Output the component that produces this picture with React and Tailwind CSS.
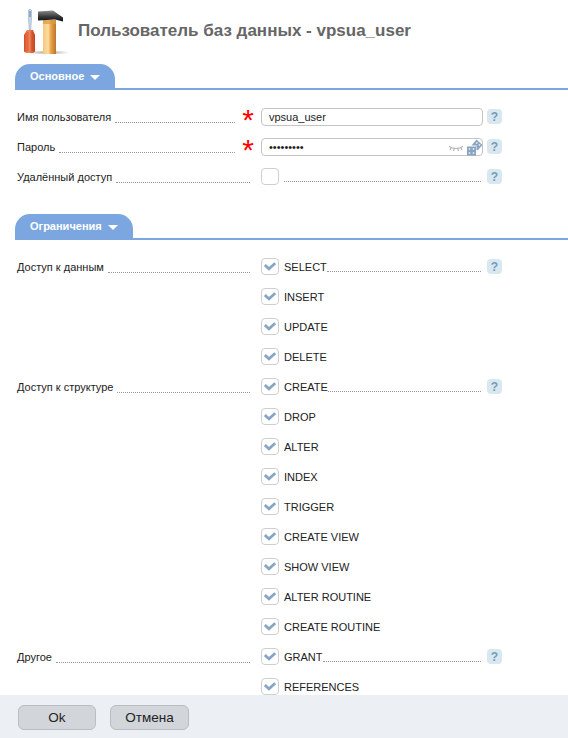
const font = { fontFamily: '"Liberation Sans", Arial, sans-serif' };

function Logo() {
  return (
    <svg width="60" height="56" viewBox="0 0 60 56" className="shrink-0 mb-[7px]">
      <defs>
        <linearGradient id="hnd" x1="0" x2="1" y1="0" y2="0">
          <stop offset="0" stopColor="#f6c67c" />
          <stop offset="0.4" stopColor="#fbdca4" />
          <stop offset="0.6" stopColor="#eaa548" />
          <stop offset="1" stopColor="#b9752a" />
        </linearGradient>
        <linearGradient id="red" x1="0" x2="1" y1="0" y2="0">
          <stop offset="0" stopColor="#d9481f" />
          <stop offset="0.45" stopColor="#f28a5e" />
          <stop offset="1" stopColor="#c63d16" />
        </linearGradient>
        <linearGradient id="head" x1="0" x2="0" y1="0" y2="1">
          <stop offset="0" stopColor="#8a8a8a" />
          <stop offset="0.55" stopColor="#3a3a3a" />
          <stop offset="1" stopColor="#0e0e0e" />
        </linearGradient>
        <radialGradient id="shadow">
          <stop offset="0" stopColor="#8a8070" stopOpacity="0.75" />
          <stop offset="1" stopColor="#8a8070" stopOpacity="0" />
        </radialGradient>
      </defs>
      <ellipse cx="38" cy="51.5" rx="22" ry="2.2" fill="url(#shadow)" />
      <path d="M18.5 9 Q20 7.5 21.5 9 L21.5 18 L20.8 29 L19.2 29 L18.5 18 Z" fill="#c6d6e8" stroke="#8aa5c2" strokeWidth="0.5" />
      <rect x="19.5" y="10" width="1" height="6" fill="#5a7ca4" />
      <path d="M17 29 L23 29 L25 34 L25 50 Q25 52 20 52 Q14 52 14 50 L14 34 Z" fill="url(#red)" />
      <path d="M18 31 L18 50 M22 31 L22 50" stroke="#a82e0c" strokeWidth="0.7" opacity="0.5" />
      <rect x="33" y="19" width="13" height="34" fill="url(#hnd)" />
      <rect x="33" y="19" width="13" height="4" fill="#d99a45" opacity="0.7" />
      <path d="M28 10.5 L43 9.5 L53 16.5 L53 20.5 L45 18.5 L28 19.5 Z" fill="url(#head)" />
    </svg>
  );
}

function Tab({ children }) {
  return (
    <div className="flex flex-col">
      <div className="flex items-end">
        <div className="h-6 flex items-center gap-[6px] pl-[15px] pr-[15px] rounded-t-[15px] bg-[#7ba6df] text-white font-bold text-[11px]">
          <span>{children}</span>
          <svg width="10" height="5" viewBox="0 0 10 5" className="mt-[2px]"><path d="M0 0H10L5 5Z" fill="#fff" /></svg>
        </div>
      </div>
      <div className="h-[2px] bg-[#7ba6df]" />
    </div>
  );
}

function Help() {
  return (
    <div className="w-[15px] h-[15px] mb-[1px] rounded-[4px] bg-[#d9e7ef] text-[#6f9dc0] font-bold text-[12px] flex items-center justify-center shrink-0">?</div>
  );
}

function Box({ checked }) {
  return (
    <div className="w-[18px] h-[17px] mb-[1px] rounded-[4px] border border-[#cfcfcf] bg-white flex items-center justify-center shrink-0">
      {checked && (
        <svg width="12" height="9" viewBox="0 0 12 9">
          <path d="M0.8 3 L5 6.8 L11.2 1.2" fill="none" stroke="#86a6c4" strokeWidth="2.8" />
        </svg>
      )}
    </div>
  );
}

function Row({ label, star, help, children }) {
  return (
    <div className="h-[30px] flex items-center">
      <div className={"flex items-center gap-1 pl-[17px] shrink-0 " + (star ? "w-[235px]" : "w-[250px]")}>
        {label && <span className="whitespace-nowrap">{label}</span>}
        {label && <div className="flex-1 mt-[10px] border-b border-dotted border-[#999]" />}
      </div>
      <div className={"flex justify-center text-[#f00] text-[30px] leading-none font-normal h-[18px] -mt-[6px] shrink-0 " + (star ? "w-[26px]" : "w-[11px]")}>
        {star ? "*" : ""}
      </div>
      <div className="w-[222px] flex items-center shrink-0">{children}</div>
      <div className="w-[4px] shrink-0" />
      {help ? <Help /> : null}
    </div>
  );
}

function RightLeader({ className = "" }) {
  return <div className={"flex-1 mt-2 mr-[2px] border-b border-dotted border-[#999] " + className} />;
}

function CheckRow({ label, text, help }) {
  return (
    <Row label={label} help={help}>
      <Box checked />
      <span className="ml-[5px] whitespace-nowrap">{text}</span>
      {help && <RightLeader />}
    </Row>
  );
}

function Input({ children, icons }) {
  return (
    <div className="w-full h-[18px] rounded-[4px] border border-[#c4c4c4] bg-white flex items-center pl-[7px] text-[#222]">
      <span className="flex-1">{children}</span>
      {icons}
    </div>
  );
}

const pwIcons = (
  <div className="flex items-center gap-[3px] mr-[-1px]">
    <svg width="16" height="7" viewBox="0 0 16 7" className="mt-[3px]">
      <path d="M1 1.5 Q8 5.5 15 1.5 M3 3 L2 5 M6 4 L5.5 6 M10 4 L10.5 6 M13 3 L14 5" fill="none" stroke="#a8a8a8" strokeWidth="1" />
    </svg>
    <svg width="16" height="17" viewBox="0 0 16 17">
      <path d="M9.5 0.5 L15.5 6 L11 11 L9.5 11 L9.5 6.5 L4.5 6.5 Z" fill="#8aa5c2" />
      <circle cx="9.8" cy="4" r="0.9" fill="#dfe8f0" />
      <circle cx="12.5" cy="6" r="0.9" fill="#dfe8f0" />
      <rect x="0" y="7.5" width="9" height="9" fill="#8aa5c2" />
      <circle cx="2.5" cy="10" r="0.9" fill="#dfe8f0" />
      <circle cx="6.5" cy="10" r="0.9" fill="#dfe8f0" />
      <circle cx="2.5" cy="14" r="0.9" fill="#dfe8f0" />
      <circle cx="6.5" cy="14" r="0.9" fill="#dfe8f0" />
    </svg>
  </div>
);

function Btn({ children, className = "" }) {
  return (
    <div className={"h-[25px] pt-[1px] rounded-[6px] border border-[#b9bec4] bg-[#d2d6db] flex items-center justify-center text-[13.5px] text-[#222] " + className}>
      {children}
    </div>
  );
}

export default function App() {
  return (
    <div style={font} className="w-[568px] h-[738px] flex flex-col bg-white text-[11px] text-[#222] overflow-hidden">
      <div className="flex-1 min-h-0 overflow-hidden">
        <div className="h-[64px] flex items-center pl-[10px] gap-2">
          <Logo />
          <h1 className="text-[17px] mb-[2px] font-bold text-[#666]">Пользователь баз данных - vpsua_user</h1>
        </div>
        <div className="pl-[15px]"><Tab>Основное</Tab></div>
        <div className="pt-3 pb-[22px]">
          <Row label="Имя пользователя" star help><Input>vpsua_user</Input></Row>
          <Row label="Пароль" star help><Input icons={pwIcons}>•••••••••</Input></Row>
          <Row label="Удалённый доступ" help>
            <Box />
            <RightLeader className="ml-[5px]" />
          </Row>
        </div>
        <div className="pl-[15px]"><Tab>Ограничения</Tab></div>
        <div className="pt-3">
          <CheckRow label="Доступ к данным" text="SELECT" help />
          <CheckRow text="INSERT" />
          <CheckRow text="UPDATE" />
          <CheckRow text="DELETE" />
          <CheckRow label="Доступ к структуре" text="CREATE" help />
          <CheckRow text="DROP" />
          <CheckRow text="ALTER" />
          <CheckRow text="INDEX" />
          <CheckRow text="TRIGGER" />
          <CheckRow text="CREATE VIEW" />
          <CheckRow text="SHOW VIEW" />
          <CheckRow text="ALTER ROUTINE" />
          <CheckRow text="CREATE ROUTINE" />
          <CheckRow label="Другое" text="GRANT" help />
          <CheckRow text="REFERENCES" />
        </div>
      </div>
      <div className="h-[43px] pt-[2px] shrink-0 bg-[#ecf0f4] flex items-center pl-[18px] gap-[14px]">
        <Btn className="w-[78px]">Ok</Btn>
        <Btn className="w-[79px]">Отмена</Btn>
      </div>
    </div>
  );
}
